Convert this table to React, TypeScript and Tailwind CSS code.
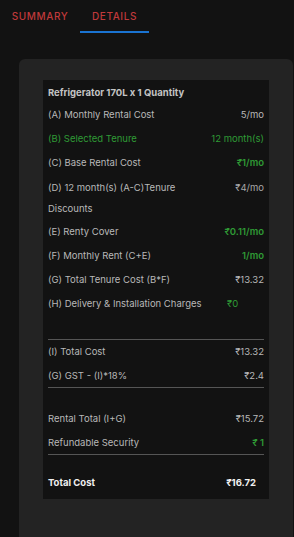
import React from 'react'

const FONT = "font-['Inter','Noto_Sans','DejaVu_Sans',sans-serif]"

type Row = {
  label: string
  value: string
  tone?: 'green' | 'greenBold' | 'gray'
  labelGreen?: boolean
}

const ROWS: Row[] = [
  { label: '(A) Monthly Rental Cost', value: '5/mo' },
  { label: '(B) Selected Tenure', value: '12 month(s)', tone: 'green', labelGreen: true },
  { label: '(C) Base Rental Cost', value: '₹1/mo', tone: 'greenBold' },
]

function valueClass(tone?: Row['tone']) {
  if (tone === 'green') return 'text-[#2f9a35]'
  if (tone === 'greenBold') return 'text-[#2f9a35] font-semibold'
  return 'text-[#b8b8b8]'
}

function Line({ label, value, tone, labelGreen }: Row) {
  return (
    <div className="flex h-[24px] items-center justify-between">
      <span className={labelGreen ? 'text-[#2f9a35]' : 'text-[#b8b8b8]'}>{label}</span>
      <span className={valueClass(tone)}>{value}</span>
    </div>
  )
}

export default function App() {
  return (
    <div className={`h-[537px] w-full overflow-hidden bg-[#121212] ${FONT}`}>
      {/* Tabs */}
      <div className="flex h-[33px]">
        <div className="flex w-[80px] items-start justify-center pt-[9px] text-[10px] font-medium uppercase tracking-[0.6px] text-[#c0393b]">
          Summary
        </div>
        <div className="flex w-[69px] flex-col items-center justify-between pt-[9px] text-[10px] font-medium uppercase tracking-[0.6px] text-[#c0393b]">
          <span>Details</span>
          <div className="h-[2px] w-full bg-[#1a73d1]" />
        </div>
      </div>

      {/* Card */}
      <div className="ml-[19px] mr-[1px] mt-[26px] h-[500px] rounded-t-[6px] bg-[#232323] pl-[24px] pt-[21px]">
        <div className="w-[226px] bg-[#121212] px-[5px] pb-[4px] pt-[3px] text-[9.5px] leading-[12px]">
          <div className="flex h-[20px] items-center font-bold text-[#c4c4c4]">
            Refrigerator 170L x 1 Quantity
          </div>
          <div>
            {ROWS.map((r) => (
              <Line key={r.label} {...r} />
            ))}
          </div>

          <div className="flex justify-between pt-[1.5px] pb-[1.5px]">
            <span className="w-[150px] leading-[21px] text-[#b8b8b8]">
              (D) 12 month(s) (A-C)Tenure Discounts
            </span>
            <span className="leading-[21px] text-[#a8a8a8]">₹4/mo</span>
          </div>

          <Line label="(E) Renty Cover" value="₹0.11/mo" tone="greenBold" />
          <Line label="(F) Monthly Rent (C+E)" value="1/mo" tone="greenBold" />
          <Line label="(G) Total Tenure Cost (B*F)" value="₹13.32" />

          <div className="flex h-[24px] items-center">
            <span className="w-[179px] shrink-0 text-[#b8b8b8]">(H) Delivery &amp; Installation Charges</span>
            <span className="text-[#2f9a35]">₹0</span>
          </div>

          <div className="mt-[23px] h-px bg-[#555]" />
          <Line label="(I) Total Cost" value="₹13.32" />
          <div className="flex h-[23px] items-center justify-between">
            <span className="text-[#b8b8b8]">(G) GST - (I)*18%</span>
            <span className="text-[#b8b8b8]">₹2.4</span>
          </div>
          <div className="h-px bg-[#555]" />

          <div className="mt-[19px]">
            <Line label="Rental Total (I+G)" value="₹15.72" />
            <div className="flex h-[23px] items-center justify-between">
              <span className="text-[#b8b8b8]">Refundable Security</span>
              <span className="text-[#2f9a35] font-semibold">₹ 1</span>
            </div>
            <div className="h-px bg-[#555]" />
          </div>

          <div className="mt-[16px] flex h-[24px] items-center justify-between pr-[8px] font-bold text-[#f0f0f0]">
            <span>Total Cost</span>
            <span>₹16.72</span>
          </div>
        </div>
      </div>
    </div>
  )
}
